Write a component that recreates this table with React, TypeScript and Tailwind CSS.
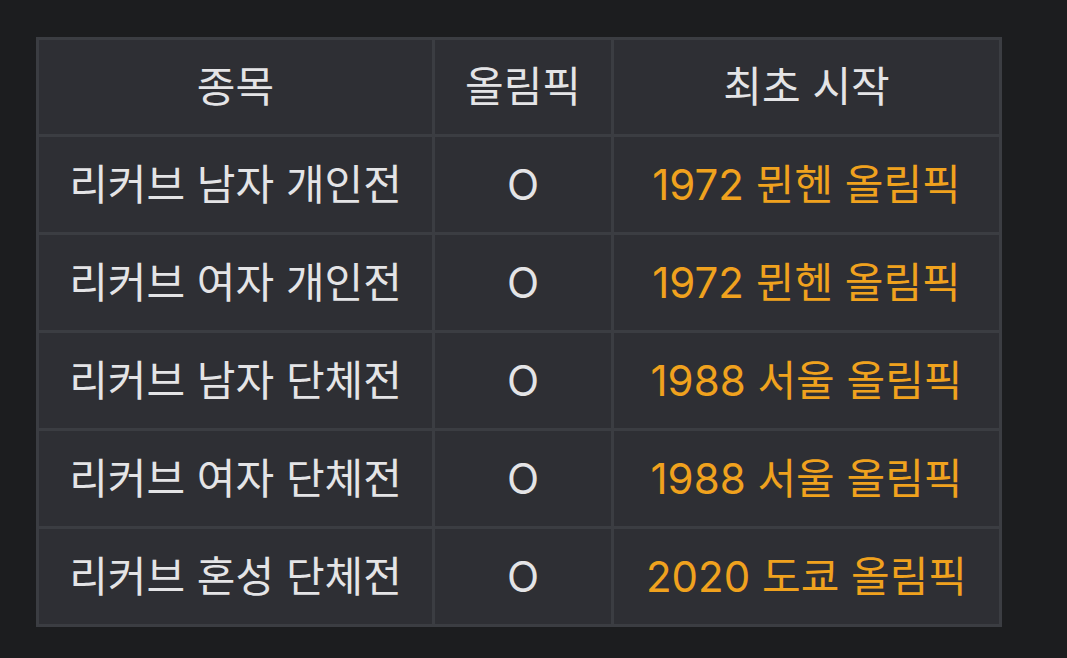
const header = ['종목', '올림픽', '최초 시작'];

const rows = [
  ['리커브 남자 개인전', 'O', '1972 뮌헨 올림픽'],
  ['리커브 여자 개인전', 'O', '1972 뮌헨 올림픽'],
  ['리커브 남자 단체전', 'O', '1988 서울 올림픽'],
  ['리커브 여자 단체전', 'O', '1988 서울 올림픽'],
  ['리커브 혼성 단체전', 'O', '2020 도쿄 올림픽'],
];

export default function App() {
  return (
    <div
      className="min-h-[658px] w-full bg-[#1c1d1f] pt-[37px] pl-[36px]"
      style={{ fontFamily: 'Inter, "Noto Sans CJK KR", sans-serif' }}
    >
      <div className="grid w-fit grid-cols-[393px_176px_385px] gap-[3px] bg-[#3b3d42] p-[3px] text-[42px] leading-none">
        {header.map((h) => (
          <div key={h} className="flex h-[94px] items-center justify-center bg-[#2e2f34] text-[#e4e4e6]">
            {h}
          </div>
        ))}
        {rows.map((r, i) => (
          <>
            <div key={`a${i}`} className="flex h-[95px] items-center justify-center bg-[#2e2f34] text-[#e4e4e6]">
              {r[0]}
            </div>
            <div key={`b${i}`} className="flex h-[95px] items-center justify-center bg-[#2e2f34] text-[#e4e4e6]">
              {r[1]}
            </div>
            <div key={`c${i}`} className="flex h-[95px] items-center justify-center bg-[#2e2f34] text-[#f0a21e]">
              {r[2]}
            </div>
          </>
        ))}
      </div>
    </div>
  );
}
